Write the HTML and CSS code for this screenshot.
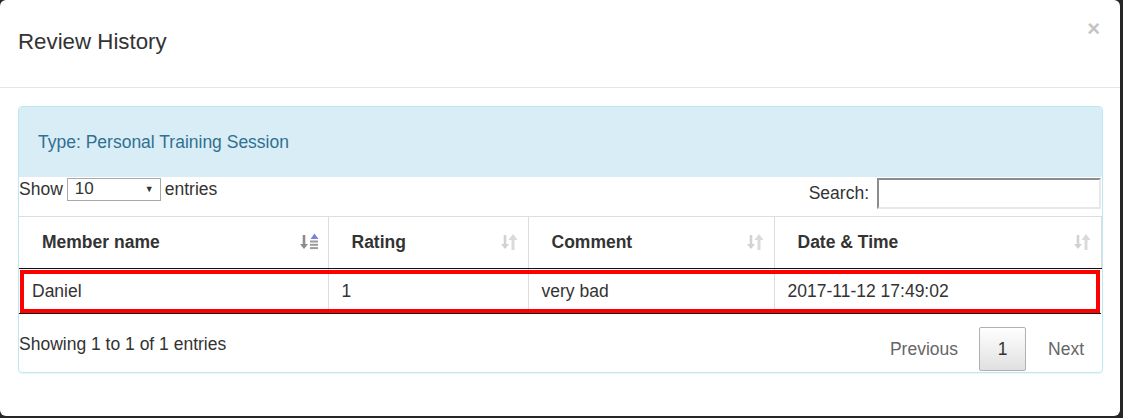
FILE: index.html
```html
<!DOCTYPE html>
<html>
<head>
<meta charset="utf-8">
<link rel="stylesheet" href="styles.css">
</head>
<body>
<div class="modal">
  <div class="modal-header">
    <h4 class="modal-title">Review History</h4>
    <span class="close">×</span>
  </div>
  <div class="modal-body">
    <div class="panel">
      <div class="panel-heading">Type: Personal Training Session</div>
      <div class="panel-body">
        <div class="dt-top">
          <div class="length">Show <span class="select"><span>10</span><span class="caret">▼</span></span> entries</div>
          <div class="filter">Search: <span class="search-input"></span></div>
        </div>
        <table class="dt">
          <colgroup>
            <col class="c1"><col class="c2"><col class="c3"><col class="c4">
          </colgroup>
          <thead>
            <tr>
              <th><span>Member name</span>
                <svg class="sort" width="19" height="20" viewBox="0 0 19 20"><path d="M4 3v11" stroke="#8c8c8c" stroke-width="2.6"/><path d="M0 12l4 5 4-5z" fill="#8c8c8c"/><path d="M10.5 7l4-5.5 4 5.5z" fill="#7a84dc"/><rect x="10" y="8.5" width="8" height="2" fill="#9c9c9c"/><rect x="10" y="11.8" width="8" height="2" fill="#9c9c9c"/><rect x="10" y="15.1" width="8" height="2" fill="#9c9c9c"/></svg>
              </th>
              <th><span>Rating</span>
                <svg class="sort" width="19" height="20" viewBox="0 0 19 20"><path d="M5 3v11" stroke="#d2d2d2" stroke-width="2.6"/><path d="M1 12l4 5 4-5z" fill="#d2d2d2"/><path d="M13 18V7" stroke="#dadada" stroke-width="3"/><path d="M8.5 8l4.5-6 4.5 6z" fill="#dadada"/></svg>
              </th>
              <th><span>Comment</span>
                <svg class="sort" width="19" height="20" viewBox="0 0 19 20"><path d="M5 3v11" stroke="#d2d2d2" stroke-width="2.6"/><path d="M1 12l4 5 4-5z" fill="#d2d2d2"/><path d="M13 18V7" stroke="#dadada" stroke-width="3"/><path d="M8.5 8l4.5-6 4.5 6z" fill="#dadada"/></svg>
              </th>
              <th><span>Date &amp; Time</span>
                <svg class="sort" width="19" height="20" viewBox="0 0 19 20"><path d="M5 3v11" stroke="#d2d2d2" stroke-width="2.6"/><path d="M1 12l4 5 4-5z" fill="#d2d2d2"/><path d="M13 18V7" stroke="#dadada" stroke-width="3"/><path d="M8.5 8l4.5-6 4.5 6z" fill="#dadada"/></svg>
              </th>
            </tr>
          </thead>
          <tbody>
            <tr class="hl">
              <td>Daniel</td>
              <td>1</td>
              <td>very bad</td>
              <td>2017-11-12 17:49:02</td>
            </tr>
          </tbody>
        </table>
        <div class="dt-bottom">
          <div class="info">Showing 1 to 1 of 1 entries</div>
          <div class="paging">
            <span class="pbtn prev">Previous</span>
            <span class="pbtn current">1</span>
            <span class="pbtn next">Next</span>
          </div>
        </div>
      </div>
    </div>
  </div>
</div>
</body>
</html>
```

FILE: styles.css
```css
html, body {
  margin: 0;
  padding: 0;
  background: #262626;
  height: 418px;
  overflow: hidden;
}
body {
  font-family: "Liberation Sans", Arial, sans-serif;
  color: #333;
  font-size: 17.5px;
}
.modal {
  width: 1120px;
  height: 416px;
  background: #fff;
  border-radius: 6px;
  box-sizing: border-box;
}
.modal-header {
  height: 88px;
  box-sizing: border-box;
  border-bottom: 1px solid #e5e5e5;
  display: flex;
  align-items: center;
  justify-content: space-between;
  padding: 0 20px 4px 18px;
}
.modal-title {
  margin: 0;
  font-weight: normal;
  font-size: 22.3px;
  color: #333;
}
.close {
  font-size: 22px;
  font-weight: bold;
  color: #c4c4c4;
  align-self: flex-start;
  margin-top: 18px;
  line-height: 1;
}
.modal-body {
  padding: 18px 17px 18px 18px;
}
.panel {
  border: 1px solid #bce8f1;
  border-radius: 4px;
  height: 267px;
  box-sizing: border-box;
  box-shadow: 0 1px 1px rgba(0,0,0,.05);
}
.panel-heading {
  background: #d9edf7;
  color: #31708f;
  height: 70px;
  display: flex;
  align-items: center;
  padding-left: 19px;
  border-radius: 3px 3px 0 0;
  font-size: 17.5px;
}
.panel-body {
  width: 1082px;
}
.dt-top {
  height: 39px;
  display: flex;
  justify-content: space-between;
  align-items: flex-start;
}
.length {
  display: flex;
  align-items: center;
  gap: 4px;
  margin-top: 1px;
  height: 22px;
}
.select {
  display: inline-flex;
  align-items: center;
  justify-content: space-between;
  width: 94px;
  height: 23px;
  box-sizing: border-box;
  border: 1px solid #a9a9a9;
  padding: 0 6px 0 7px;
  font-size: 17px;
}
.caret {
  font-size: 9px;
  color: #333;
}
.filter {
  display: flex;
  align-items: center;
  gap: 8px;
  height: 32px;
}
.search-input {
  display: inline-block;
  width: 224px;
  height: 31px;
  box-sizing: border-box;
  border-top: 2px solid #8c8c8c;
  border-left: 2px solid #8c8c8c;
  border-right: 2px solid #e8e8e8;
  border-bottom: 2px solid #e8e8e8;
}
.dt {
  width: 1082px;
  border-collapse: collapse;
  table-layout: fixed;
}
.c1 { width: 309px; }
.c2 { width: 200px; }
.c3 { width: 246px; }
.c4 { width: 327px; }
.dt th {
  height: 51px;
  padding: 0 8px 0 23px;
  text-align: left;
  font-weight: bold;
  font-size: 17.5px;
  border-top: 1px solid #ddd;
  border-left: 1px solid #ddd;
  border-bottom: 1px solid #111;
  position: relative;
}
.dt th:first-child { border-left: 0; }
.dt th:last-child { border-right: 1px solid #ddd; }
.dt th span { display: inline-block; }
.sort {
  position: absolute;
  right: 9px;
  top: 15px;
}
.dt td {
  height: 44px;
  padding: 0 13px;
  border-left: 1px solid #ddd;
  border-bottom: 1px solid #111;
  font-size: 17.5px;
}
.dt td:first-child { border-left: 0; padding-left: 13px; }
.dt tr.hl {
  outline: 4px solid #f00;
  outline-offset: -5px;
}
.dt-bottom {
  display: flex;
  justify-content: space-between;
  align-items: flex-start;
  padding-top: 13px;
}
.info {
  margin-top: 7px;
}
.paging {
  display: flex;
  align-items: center;
}
.pbtn {
  color: #666;
  line-height: 44px;
  font-size: 17.5px;
}
.pbtn.prev { padding: 0 21px; }
.pbtn.next { padding: 0 17px 0 22px; }
.pbtn.current {
  width: 47px;
  height: 44px;
  box-sizing: border-box;
  padding: 0;
  text-align: center;
  border: 1px solid #b0b0b0;
  border-radius: 2px;
  color: #333;
  line-height: 42px;
  background: linear-gradient(#fff, #e0e0e0);
}
```
